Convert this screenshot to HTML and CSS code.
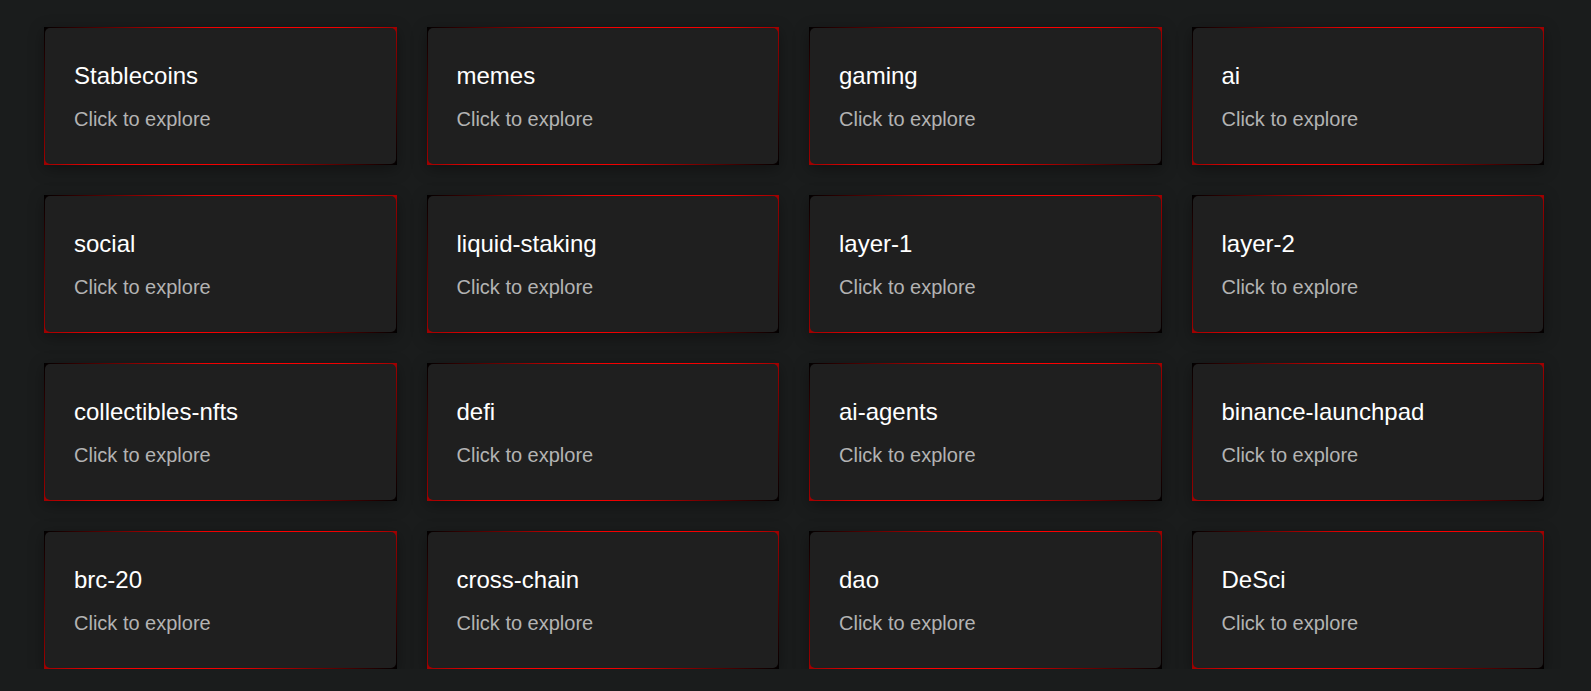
FILE: index.html
```html
<!DOCTYPE html>
<html lang="en">
<head>
<meta charset="utf-8">
<title>Categories</title>
<link rel="stylesheet" href="styles.css">
</head>
<body>
<main class="grid">
  <a class="card"><div class="card-body"><h3 class="card-title">Stablecoins</h3><p class="card-sub">Click to explore</p></div></a>
  <a class="card"><div class="card-body"><h3 class="card-title">memes</h3><p class="card-sub">Click to explore</p></div></a>
  <a class="card"><div class="card-body"><h3 class="card-title">gaming</h3><p class="card-sub">Click to explore</p></div></a>
  <a class="card"><div class="card-body"><h3 class="card-title">ai</h3><p class="card-sub">Click to explore</p></div></a>
  <a class="card"><div class="card-body"><h3 class="card-title">social</h3><p class="card-sub">Click to explore</p></div></a>
  <a class="card"><div class="card-body"><h3 class="card-title">liquid-staking</h3><p class="card-sub">Click to explore</p></div></a>
  <a class="card"><div class="card-body"><h3 class="card-title">layer-1</h3><p class="card-sub">Click to explore</p></div></a>
  <a class="card"><div class="card-body"><h3 class="card-title">layer-2</h3><p class="card-sub">Click to explore</p></div></a>
  <a class="card"><div class="card-body"><h3 class="card-title">collectibles-nfts</h3><p class="card-sub">Click to explore</p></div></a>
  <a class="card"><div class="card-body"><h3 class="card-title">defi</h3><p class="card-sub">Click to explore</p></div></a>
  <a class="card"><div class="card-body"><h3 class="card-title">ai-agents</h3><p class="card-sub">Click to explore</p></div></a>
  <a class="card"><div class="card-body"><h3 class="card-title">binance-launchpad</h3><p class="card-sub">Click to explore</p></div></a>
  <a class="card"><div class="card-body"><h3 class="card-title">brc-20</h3><p class="card-sub">Click to explore</p></div></a>
  <a class="card"><div class="card-body"><h3 class="card-title">cross-chain</h3><p class="card-sub">Click to explore</p></div></a>
  <a class="card"><div class="card-body"><h3 class="card-title">dao</h3><p class="card-sub">Click to explore</p></div></a>
  <a class="card"><div class="card-body"><h3 class="card-title">DeSci</h3><p class="card-sub">Click to explore</p></div></a>
</main>
</body>
</html>
```
FILE: styles.css
```css
html, body {
  margin: 0;
  padding: 0;
  background: #1a1c1c;
  font-family: "Liberation Sans", Arial, sans-serif;
  overflow: hidden;
}

.grid {
  display: grid;
  grid-template-columns: repeat(4, 352.5px);
  grid-auto-rows: 138px;
  gap: 30px;
  padding: 27px 0 0 44px;
}

.card {
  display: block;
  padding: 1px;
  background: linear-gradient(128deg, #000 0%, #ee0000 35%, #ff0000 50%, #ee0000 65%, #000 100%);
  box-shadow: 0 4px 14px rgba(0, 0, 0, 0.35);
  text-decoration: none;
  cursor: pointer;
}

.card-body {
  height: 100%;
  box-sizing: border-box;
  background: #1f1f1f;
  border-radius: 5px;
  padding: 33px 29px 0;
}

.card-title {
  margin: 0 0 17px;
  font-size: 24px;
  line-height: 30px;
  font-weight: 400;
  color: #ffffff;
}

.card-sub {
  margin: 0;
  font-size: 20px;
  line-height: 22px;
  color: #b3b3b3;
}
```
